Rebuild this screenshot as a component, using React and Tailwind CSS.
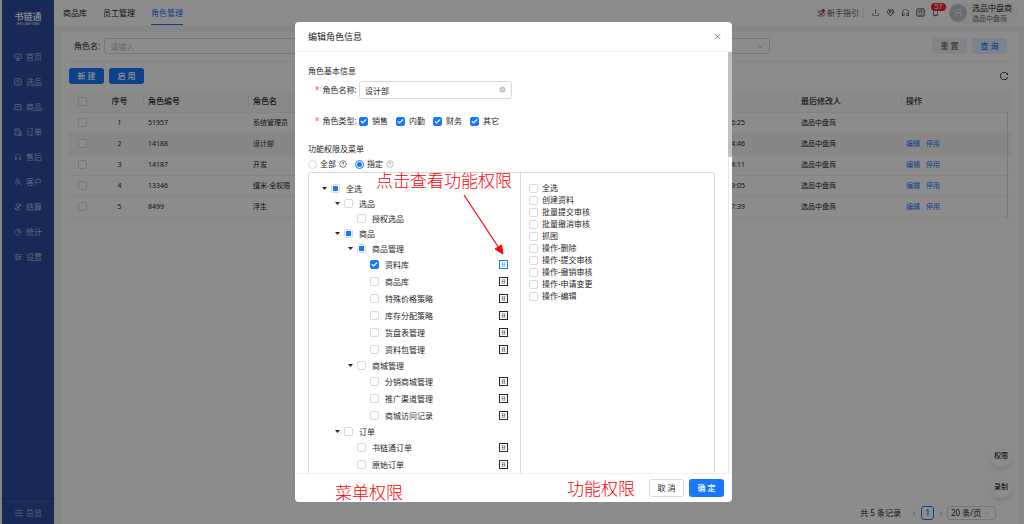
import React from 'react';
import {
  AiFillCloseCircle,
  AiOutlineBell,
  AiOutlineClose,
  AiOutlineCustomerService,
  AiOutlineDown,
  AiOutlineLeft,
  AiOutlinePieChart,
  AiOutlineQuestionCircle,
  AiOutlineReload,
  AiOutlineRight,
  AiOutlineTeam,
  AiOutlineUpload,
  AiOutlineUser,
} from 'react-icons/ai';
import { Check } from 'lucide-react';

/* ---------- Icônes dessinées ---------- */

const Svg = ({ className = 'size-[8px]', children }) => (
  <svg viewBox="0 0 16 16" className={className} fill="none" stroke="currentColor" strokeWidth="1.6" aria-hidden="true">
    {children}
  </svg>
);

const ScreenIcon = () => (
  <Svg>
    <rect x="1.5" y="2" width="13" height="9" rx="1" />
    <path d="M4 14.5h8M8 11v3.5M5 6.5l2.2 2L11 5" />
  </Svg>
);

const PickIcon = ({ className }) => (
  <Svg className={className}>
    <rect x="1.5" y="1.5" width="13" height="13" rx="1" />
    <path d="M4.5 12h7M5.5 4.500h5v4l-2.500-1.500-2.500 1.500z" strokeWidth="1.200" />
  </Svg>
);

const BagIcon = () => (
  <Svg>
    <path d="M2.500 3h11l1 10.500h-13zM5.500 6c0 3.500 5 3.500 5 0" />
  </Svg>
);

const OrderIcon = () => (
  <Svg>
    <path d="M10.500 14H2V2h8.500v5M4.500 5h3.500M4.500 8h2" />
    <path d="M10.500 7.500h4V14h-4zM8 14.500h7" />
  </Svg>
);

const SettleIcon = () => (
  <Svg>
    <path d="M13.800 6A6 6 0 0 0 3 4.500M2.200 10A6 6 0 0 0 13 11.500M13.500 2.500 13.800 6l-3.300-.5M2.500 13.500 2.200 10l3.300.5" />
    <path d="m5.800 4.500 2.200 3 2.200-3M8 7.500v4M5.800 8.500h4.400" />
  </Svg>
);

const SettingIcon = () => (
  <Svg>
    <path d="M1 3.500h14M1 8h14M1 12.500h14M5 1.800v3.400M11 6.300v3.400M5 10.800v3.400" />
  </Svg>
);

const MenuIcon = () => (
  <Svg>
    <path d="M0.500 2.500h15M0.500 8h15M0.500 13.500h15" strokeWidth="1.500" />
  </Svg>
);

const GuideIcon = () => (
  <Svg>
    <path d="M9 4H4.500a2 2 0 0 0 0 4H12a2.500 2.500 0 0 1 0 6H4a2.500 2.500 0 0 1-2.500-2.500M5 11h6.500" />
    <circle cx="12.500" cy="3.500" r="3.300" fill="#ff0f1a" stroke="none" />
  </Svg>
);

const HandshakeIcon = () => (
  <Svg className="size-[9px]">
    <path d="M8 14 1.800 7.500 4.500 3 8 4l3.500-1 2.700 4.500zM8 4 5.500 7l1.800 1.300L9.500 6.500l3.200 3.200" />
  </Svg>
);

const GridIcon = () => (
  <svg viewBox="0 0 18 18" className="size-[9px]" fill="none" stroke="currentColor" aria-hidden="true">
    <rect x="1" y="1" width="16" height="16" strokeWidth="2" />
    <path d="M5 5.500h8M5 9h8M5 12.500h8M7 5v8M11 5v8" strokeWidth="1" opacity=".75" />
  </svg>
);

/* ---------- Données ---------- */

const MENU = [
  { label: '首页', icon: ScreenIcon },
  { label: '选品', icon: PickIcon },
  { label: '商品', icon: BagIcon },
  { label: '订单', icon: OrderIcon },
  { label: '售后', icon: AiOutlineCustomerService },
  { label: '客户', icon: AiOutlineTeam },
  { label: '结算', icon: SettleIcon },
  { label: '统计', icon: AiOutlinePieChart },
  { label: '设置', icon: SettingIcon },
];

const ROLES = [
  { id: '51957', name: '系统管理员', time: '16:25' },
  { id: '14188', name: '设计部', time: '14:46' },
  { id: '14187', name: '开发', time: '14:11' },
  { id: '13346', name: '缙米-全权限', time: '19:05' },
  { id: '8499', name: '浮生', time: '17:39' },
];

const TREE = [
  { level: 0, label: '全选', open: true, state: 'half' },
  { level: 1, label: '选品', open: true },
  { level: 2, label: '授权选品' },
  { level: 1, label: '商品', open: true, state: 'half' },
  { level: 2, label: '商品管理', open: true, state: 'half' },
  { level: 3, label: '资料库', state: 'on', action: true, active: true },
  { level: 3, label: '商品库', action: true },
  { level: 3, label: '特殊价格策略', action: true },
  { level: 3, label: '库存分配策略', action: true },
  { level: 3, label: '货盘表管理', action: true },
  { level: 3, label: '资料包管理', action: true },
  { level: 2, label: '商城管理', open: true },
  { level: 3, label: '分销商城管理', action: true },
  { level: 3, label: '推广渠道管理', action: true },
  { level: 3, label: '商城访问记录', action: true },
  { level: 1, label: '订单', open: true },
  { level: 2, label: '书链通订单', action: true },
  { level: 2, label: '原始订单', action: true },
];

const INDENT = ['pl-[8px]', 'pl-[21px]', 'pl-[34px]', 'pl-[47px]'];

const ACTIONS = [
  '全选', '创建资料', '批量提交审核', '批量撤消审核', '抓图',
  '操作-删除', '操作-提交审核', '操作-撤销审核', '操作-申请变更', '操作-编辑',
];

/* ---------- Éléments communs ---------- */

const Checkbox = ({ label, state, gap = 'gap-1', hideLabel }) => (
  <label className={`flex items-center whitespace-nowrap ${gap}`}>
    <span className="relative flex size-[9px] shrink-0">
      <input
        type="checkbox"
        defaultChecked={state === 'on'}
        aria-label={hideLabel ? label : undefined}
        className="size-[9px] appearance-none rounded-[2px] border border-[#d9d9d9] bg-white checked:border-[#1677ff] checked:bg-[#1677ff]"
      />
      {state === 'on' && <Check className="pointer-events-none absolute inset-px size-[7px] text-white" strokeWidth={4} />}
      {state === 'half' && <span className="pointer-events-none absolute inset-[2px] bg-[#1677ff]" />}
    </span>
    {!hideLabel && <span>{label}</span>}
  </label>
);

const Sidebar = () => (
  <aside className="flex w-[52px] shrink-0 flex-col bg-[#2c499f] text-[#b4bdd9]">
    <div className="flex h-11 flex-col items-center pt-[11px] text-[9px] leading-[12px] font-bold text-[#e8ecf6]">
      书链通
      <span className="text-[3px] leading-[3px] font-medium">SHU LIAN TONG</span>
    </div>
    <nav className="flex flex-1 flex-col">
      {MENU.map(({ label, icon: Icon }) => (
        <a key={label} href="#" className="flex h-[25px] items-center gap-1 pl-[12px]">
          <span className="flex size-[8px] [&>svg]:size-[8px]"><Icon /></span>
          {label}
        </a>
      ))}
    </nav>
    <a href="#" className="flex h-[23px] items-center gap-[3px] border-t border-[#3d58a8] pl-[13px]">
      <MenuIcon />
      总览
    </a>
  </aside>
);

const TopBar = () => (
  <header className="flex h-[25px] shrink-0 items-stretch bg-white pr-[5px] pl-[9px]">
    <nav className="flex gap-4 text-[#262626]">
      <a href="#" className="flex items-center">商品库</a>
      <a href="#" className="flex items-center">员工管理</a>
      <a href="#" className="flex items-center border-y border-t-transparent border-b-[#1677ff] text-[#1677ff]">角色管理</a>
    </nav>
    <div className="ml-auto flex items-center text-[#404040]">
      <a href="#" className="flex items-center gap-[2px] text-[#595959]"><GuideIcon />新手指引</a>
      <span className="mr-[7px] ml-1 h-[10px] w-px bg-[#e8e8e8]" />
      <div className="flex items-center gap-[6px]">
        <button type="button" aria-label="上传"><AiOutlineUpload size={9} /></button>
        <button type="button" aria-label="合作"><HandshakeIcon /></button>
        <button type="button" aria-label="客服"><AiOutlineCustomerService size={9} /></button>
        <button type="button" aria-label="记录"><PickIcon className="size-[9px]" /></button>
        <button type="button" aria-label="通知" className="relative">
          <AiOutlineBell size={9} />
          <span className="absolute -top-[5px] left-0 h-[8px] w-[15px] rounded-full bg-[#ff1f2e] text-center text-[7px] leading-[8px] text-white">57</span>
        </button>
      </div>
      <div className="ml-[9px] flex items-center gap-[5px] rounded-full bg-[#f7f7f7] pr-[7px]">
        <span className="flex size-[18px] items-center justify-center rounded-full bg-[#bfc5cd] text-white">
          <AiOutlineUser size={9} />
        </span>
        <div className="text-[#262626]">
          <div className="leading-[11px]">选品中盘商</div>
          <div className="text-[7px] leading-[11px] text-[#737373]">选品中盘商</div>
        </div>
      </div>
    </div>
  </header>
);

const RoleTable = () => (
  <table className="mt-[7px] w-full table-fixed border-collapse text-left text-[7px] text-[#262626]">
    <colgroup>
      <col className="w-[27px]" />
      <col className="w-[47px]" />
      <col className="w-[105px]" />
      <col className="w-[105px]" />
      <col />
      <col className="w-[105px]" />
      <col className="w-[106px]" />
      <col className="w-[4px]" />
    </colgroup>
    <thead>
      <tr className="h-[21px] border-b border-[#f0f0f0] bg-[#fafafa] text-[8px] text-[#333]">
        <th><div className="flex justify-center"><Checkbox label="全部角色" hideLabel /></div></th>
        <th className="text-center font-medium">序号</th>
        <th className="font-medium"><div className="border-l border-[#ececec] pl-1">角色编号</div></th>
        <th className="font-medium"><div className="border-l border-[#ececec] pl-1">角色名</div></th>
        <th />
        <th className="font-medium"><div className="border-l border-[#ececec] pl-1">最后修改人</div></th>
        <th className="font-medium"><div className="border-l border-[#ececec] pl-1">操作</div></th>
        <th />
      </tr>
    </thead>
    <tbody>
      {ROLES.map((role, i) => (
        <tr key={role.id} className={`h-[21px] border-b border-[#f0f0f0] ${i === 1 ? 'bg-[#f6f6f6]' : ''}`}>
          <td><div className="flex justify-center"><Checkbox label={role.name} hideLabel /></div></td>
          <td className="text-center">{i + 1}</td>
          <td className="pl-[5px]">{role.id}</td>
          <td className="pl-[5px]">{role.name}</td>
          <td className="pr-[51px] text-right">{role.time}</td>
          <td className="pl-[5px]">选品中盘商</td>
          <td className="pl-[5px]">
            {i > 0 && (
              <span className="flex gap-[6px] text-[#1677ff]">
                <a href="#">编辑</a>
                <a href="#">停用</a>
              </span>
            )}
          </td>
          <td className="border-l border-[#d9d9d9]" />
        </tr>
      ))}
    </tbody>
  </table>
);

const RolePage = () => (
  <main className="mx-[5px] mt-[7px] ml-[7px] flex flex-1 flex-col rounded-t-[3px] bg-white px-[8px] text-[#262626]">
    <div className="flex items-center border-b border-[#f0f0f0] pt-[6px] pr-1 pb-[7px] pl-[5px]">
      <label htmlFor="role" className="shrink-0 pr-1">角色名:</label>
      <input id="role" placeholder="请输入" className="h-4 w-[260px] rounded-[3px] border border-[#d9d9d9] px-[5px] placeholder:text-[#bfbfbf]" />
      <div className="relative ml-auto">
        <select aria-label="状态" className="h-4 w-[260px] appearance-none rounded-[3px] border border-[#d9d9d9]" />
        <AiOutlineDown size={7} className="pointer-events-none absolute top-[5px] right-[6px] text-[#bfbfbf]" />
      </div>
      <div className="ml-[162px] flex gap-[5px]">
        <button type="button" className="h-4 w-[35px] rounded-[3px] bg-[#f0f1f4] font-medium text-[#666]">重 置</button>
        <button type="button" className="h-4 w-[35px] rounded-[3px] bg-[#e1efff] font-medium text-[#1677ff]">查 询</button>
      </div>
    </div>
    <div className="mt-[6px] flex items-center gap-[5px]">
      <button type="button" className="h-4 w-[35px] rounded-[3px] bg-[#1677ff] font-medium text-white">新 建</button>
      <button type="button" className="h-4 w-[35px] rounded-[3px] bg-[#1677ff] font-medium text-white">启 用</button>
      <button type="button" aria-label="刷新" className="mr-[2px] ml-auto"><AiOutlineReload size={10} /></button>
    </div>
    <RoleTable />
    <div className="mt-auto mr-[15px] mb-1 flex items-center justify-end gap-[3px]">
      <span className="mr-[7px]">共 5 条记录</span>
      <button type="button" aria-label="上一页" className="text-[#a6a6a6]"><AiOutlineLeft size={7} /></button>
      <button type="button" className="h-[14px] w-[13px] rounded-[3px] border border-[#1677ff] font-medium text-[#1677ff]">1</button>
      <button type="button" aria-label="下一页" className="text-[#a6a6a6]"><AiOutlineRight size={7} /></button>
      <div className="relative">
        <select aria-label="每页条数" className="h-[14px] w-[49px] appearance-none rounded-[3px] border border-[#d9d9d9] pl-[3px]">
          <option>20 条/页</option>
        </select>
        <AiOutlineDown size={6} className="pointer-events-none absolute top-1 right-[6px] text-[#bfbfbf]" />
      </div>
    </div>
  </main>
);

/* ---------- Fenêtre d'édition du rôle ---------- */

const MenuTree = () => (
  <ul className="w-[212px] shrink-0 border-r border-[#d9d9d9] pt-2">
    {TREE.map((node, i) => (
      <li key={i} className={`flex items-center pr-[12px] ${node.action ? 'h-[17px]' : 'h-[15px]'} ${INDENT[node.level]}`}>
        <span className="flex w-[14px] justify-center">
          {node.open && (
            <svg viewBox="0 0 10 6" className="h-[3px] w-[5px]" aria-hidden="true"><path d="M0 0h10L5 6z" fill="#262626" /></svg>
          )}
        </span>
        <Checkbox label={node.label} state={node.state} gap="gap-[6px]" />
        {node.action && (
          <button type="button" aria-label={`${node.label}功能权限`} className={`ml-auto ${node.active ? 'text-[#1677ff]' : 'text-[#262626]'}`}>
            <GridIcon />
          </button>
        )}
      </li>
    ))}
  </ul>
);

const RoleDialog = () => (
  <section role="dialog" aria-labelledby="dialog-title" className="relative flex max-h-full w-[437px] flex-col rounded-[4px] bg-white text-[#262626]">
    <div className="flex h-[30px] shrink-0 items-center justify-between border-b border-[#f0f0f0] pr-[10px] pl-[13px]">
      <h2 id="dialog-title" className="text-[9px]">编辑角色信息</h2>
      <button type="button" aria-label="关闭" className="text-[#8c8c8c]"><AiOutlineClose size={9} /></button>
    </div>

    <div className="flex min-h-0 flex-1">
      <div className="flex min-w-0 flex-1 flex-col overflow-hidden px-[13px] pt-[13px]">
        <h3>角色基本信息</h3>
        <div className="mt-1 flex items-center gap-1 pl-[7px]">
          <label htmlFor="role-name" className="flex w-10 gap-[3px] whitespace-nowrap"><span className="text-[#ff4d4f]">*</span>角色名称:</label>
          <div className="relative">
            <input id="role-name" defaultValue="设计部" className="h-[18px] w-[153px] rounded-[3px] border border-[#d9d9d9] px-[5px]" />
            <AiFillCloseCircle size={7} className="absolute top-[5px] right-[6px] text-[#bfbfbf]" />
          </div>
        </div>
        <div className="mt-4 flex items-center gap-1 pl-[7px]">
          <span className="flex w-10 gap-[3px] whitespace-nowrap"><span className="text-[#ff4d4f]">*</span>角色类型:</span>
          <div className="flex gap-2">
            {['销售', '内勤', '财务', '其它'].map((type) => <Checkbox key={type} label={type} state="on" />)}
          </div>
        </div>

        <h3 className="mt-4">功能权限及菜单</h3>
        <div className="mt-[3px] flex items-center gap-2">
          <label className="flex items-center gap-[3px]">
            <input type="radio" name="scope" className="size-[9px] appearance-none rounded-full border border-[#d9d9d9]" />
            全部
            <AiOutlineQuestionCircle size={8} />
          </label>
          <label className="flex items-center gap-[3px]">
            <input type="radio" name="scope" defaultChecked className="size-[9px] appearance-none rounded-full border border-[#1677ff] bg-[#1677ff] bg-clip-content p-px" />
            指定
            <AiOutlineQuestionCircle size={8} className="text-[#8c8c8c]" />
          </label>
        </div>
        <div className="mt-[2px] flex rounded-[2px] border border-[#d9d9d9]">
          <MenuTree />
          <div className="flex flex-col pt-[9px] pl-[8px]">
            {ACTIONS.map((name) => <Checkbox key={name} label={name} />)}
          </div>
        </div>
      </div>
      <div className="w-1 shrink-0 border-l border-[#e8e8e8]">
        <div className="-ml-px h-1/4 bg-[#c1c1c1]" />
      </div>
    </div>

    <div className="flex shrink-0 justify-end gap-[5px] border-t border-[#f0f0f0] py-[5px] pr-[8px]">
      <button type="button" className="h-[18px] w-[35px] rounded-[3px] border border-[#d9d9d9]">取 消</button>
      <button type="button" className="h-[18px] w-[35px] rounded-[3px] bg-[#1677ff] font-medium text-white">确 定</button>
    </div>

    {/* Annotations rouges */}
    <div className="pointer-events-none absolute inset-0 text-[17px] leading-[18px] font-light text-[#ff0000]">
      <span className="absolute top-[150px] left-[81px]">点击查看功能权限</span>
      <span className="absolute bottom-0 left-[40px]">菜单权限</span>
      <span className="absolute bottom-1 left-[272px]">功能权限</span>
      <svg viewBox="0 0 44 62" className="absolute top-[172px] left-[167px] h-[62px] w-[44px]" aria-hidden="true">
        <path d="M2 1 37 54" stroke="#ff0000" strokeWidth="1.200" />
        <path d="M41 60 33 55 39.500 51z" fill="#ff0000" stroke="#ff0000" />
      </svg>
    </div>
  </section>
);

const App = () => (
  <div className="relative flex h-screen overflow-hidden bg-[#f4f4f4] pl-[2px] font-['Noto_Sans','Noto_Sans_CJK_SC',sans-serif] text-[8px] leading-[12px]">
    <Sidebar />
    <div className="flex min-w-0 flex-1 flex-col">
      <TopBar />
      <RolePage />
    </div>
    <div className="absolute right-3 bottom-[26px] flex flex-col gap-[9px] text-[7px]">
      <button type="button" className="size-[22px] rounded-full bg-white shadow-md">权限</button>
      <button type="button" className="size-[22px] rounded-full bg-white shadow-md">录制</button>
    </div>
    <div className="absolute inset-0 flex items-start justify-center bg-black/45 py-[22px] pl-[3px]">
      <RoleDialog />
    </div>
  </div>
);

export default App;
